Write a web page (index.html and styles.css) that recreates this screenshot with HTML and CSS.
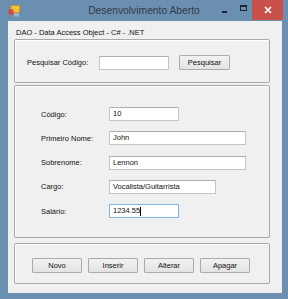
FILE: index.html
```html
<!DOCTYPE html>
<html>
<head>
<meta charset="utf-8">
<link rel="stylesheet" href="styles.css">
</head>
<body>
<div class="window">
  <div class="titlebar">
    <svg class="appicon" width="12" height="12" viewBox="0 0 12 12">
      <rect x="3" y="0.5" width="8.5" height="7" fill="#f3c33a" stroke="#c9952a" stroke-width="1"/>
      <rect x="0.5" y="4.5" width="5" height="5" fill="#d8453c"/>
      <rect x="6" y="8" width="5" height="3.5" fill="#9ab3cf"/>
    </svg>
    <div class="title">Desenvolvimento Aberto</div>
    <div class="controls">
      <div class="ctl min"><span class="dash"></span></div>
      <div class="ctl max"><span class="box"></span></div>
      <div class="ctl close">
        <svg width="8" height="8" viewBox="0 0 8 8"><path d="M1 1 L7 7 M7 1 L1 7" stroke="#fff" stroke-width="1.6"/></svg>
      </div>
    </div>
  </div>
  <div class="client">
    <div class="caption">DAO - Data Access Object - C# - .NET</div>
    <div class="group g1">
      <span class="lbl search-lbl">Pesquisar Código:</span>
      <div class="tb w70"></div>
      <button class="btn">Pesquisar</button>
    </div>
    <div class="group g2">
      <span class="lbl">Código:</span><div class="tb w70">10</div>
      <span class="lbl">Primeiro Nome:</span><div class="tb w137">John</div>
      <span class="lbl">Sobrenome:</span><div class="tb w137">Lennon</div>
      <span class="lbl">Cargo:</span><div class="tb w107">Vocalista/Guitarrista</div>
      <span class="lbl">Salário:</span><div class="tb w70 focus">1234.55<span class="caret"></span></div>
    </div>
    <div class="group g3">
      <button class="btn">Novo</button>
      <button class="btn">Inserir</button>
      <button class="btn">Alterar</button>
      <button class="btn">Apagar</button>
    </div>
  </div>
</div>
</body>
</html>
```
FILE: styles.css
```css
* { box-sizing: border-box; }
html, body { margin: 0; padding: 0; }
body {
  width: 288px;
  height: 299px;
  overflow: hidden;
  font-family: "Liberation Sans", Arial, sans-serif;
}
.window {
  width: 288px;
  height: 299px;
  background: #6b8fb1;
  display: flex;
  flex-direction: column;
  padding: 0 6px 6px 8px;
}
.titlebar {
  height: 21px;
  display: flex;
  align-items: center;
  position: relative;
}
.appicon { margin-top: 1px; }
.title {
  position: absolute;
  left: -8px;
  right: -6px;
  top: 4px;
  text-align: center;
  font-size: 10.3px;
  color: #323a46;
  line-height: 13px;
}
.controls {
  position: absolute;
  right: -1px;
  top: 0;
  display: flex;
  height: 20px;
}
.ctl {
  height: 20px;
  display: flex;
  align-items: center;
  justify-content: center;
}
.min { width: 21px; }
.dash { width: 5px; height: 2px; background: #1d2733; margin-top: 3px; }
.max { width: 17px; }
.box { width: 7px; height: 6px; border: 1px solid #1d2733; border-top-width: 2px; margin-top: -5px; }
.close { width: 31px; background: #c9514c; }
.client {
  flex: 1;
  background: #f0f0f0;
  padding: 0 12px 0 6px;
  display: flex;
  flex-direction: column;
  font-size: 7.5px;
  color: #111;
}
.caption {
  padding: 7px 0 0 2px;
  line-height: 9px;
  height: 16px;
  margin-bottom: 2px;
}
.group {
  border: 1px solid #a9a9a9;
  border-radius: 2px;
  box-shadow: inset 1px 1px 0 #fff;
}
.g1 {
  height: 44px;
  display: flex;
  align-items: center;
  padding: 3px 0 0 12px;
}
.search-lbl { width: 72px; }
.g1 .btn { margin-left: 10px; }
.g2 {
  margin-top: 2px;
  height: 153px;
  display: grid;
  grid-template-columns: 68px auto;
  grid-auto-rows: 14px;
  row-gap: 10.25px;
  align-items: center;
  justify-items: start;
  padding: 21px 0 0 26px;
}
.g3 {
  margin-top: 5px;
  height: 41px;
  display: flex;
  gap: 6px;
  padding: 14px 0 0 17px;
  align-items: flex-start;
}
.lbl { line-height: 9px; }
.tb {
  height: 14px;
  background: #fff;
  border: 1px solid #c4c4c4;
  border-top-color: #abadb3;
  line-height: 12px;
  padding-left: 3px;
  white-space: nowrap;
  display: flex;
  align-items: center;
  color: #111;
}
.w70 { width: 70px; }
.w107 { width: 107px; }
.w137 { width: 137px; }
.focus { border-color: #7eb4ea; }
.caret { display: inline-block; width: 1px; height: 9px; background: #000; }
.btn {
  width: 50px;
  height: 15px;
  padding: 0;
  font-family: inherit;
  font-size: 7.5px;
  color: #111;
  background: linear-gradient(#f2f2f2, #e3e3e3);
  border: 1px solid #acacac;
  border-radius: 1px;
}
.g1 .btn { width: 51px; }
```
